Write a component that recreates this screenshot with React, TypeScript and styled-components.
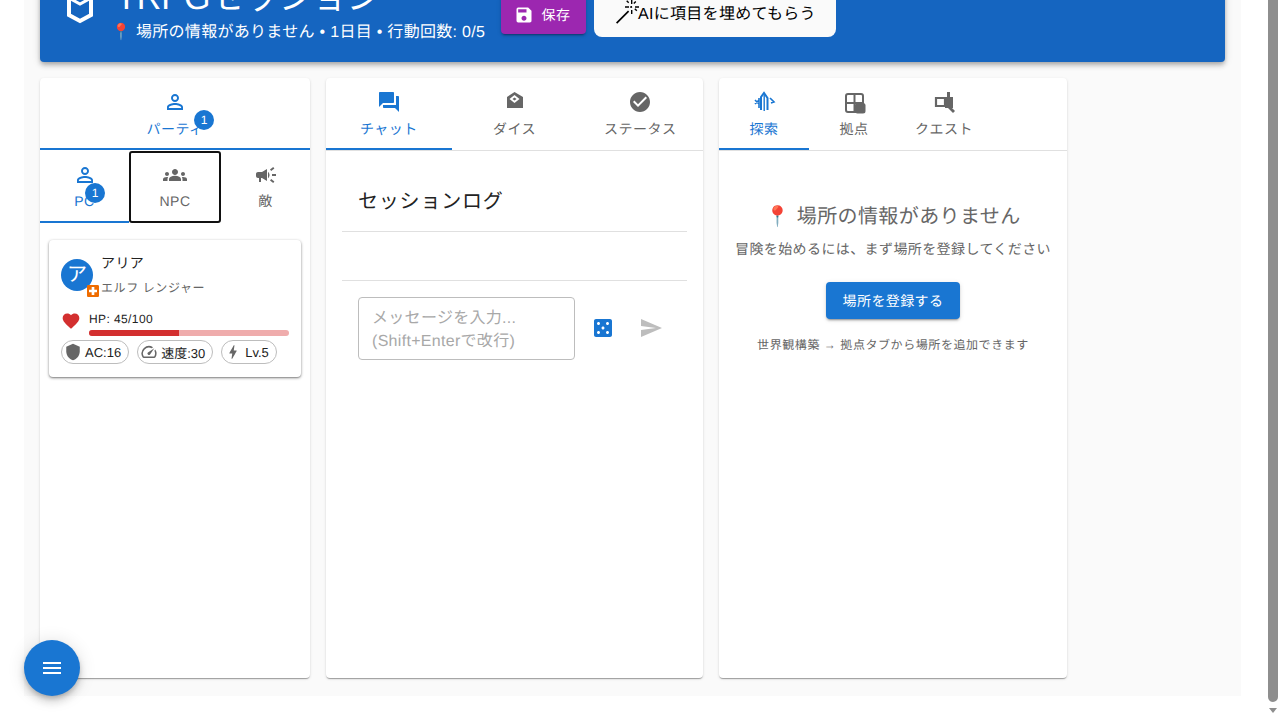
import React from "react";
import styled, { createGlobalStyle } from "styled-components";
import {
  MdBolt,
  MdCampaign,
  MdCasino,
  MdCheckCircle,
  MdFavorite,
  MdForum,
  MdGroups,
  MdLocalHospital,
  MdMenu,
  MdPersonOutline,
  MdSave,
  MdSend,
  MdShield,
  MdSpeed,
} from "react-icons/md";

const blue = "#1976d2";
const fontStack = `"Liberation Sans", "Noto Sans CJK JP", sans-serif`;

const GlobalStyle = createGlobalStyle`
  html, body {
    margin: 0;
    height: 100%;
    overflow: hidden;
    background: #fff;
    font-family: ${fontStack};
  }
  * {
    text-rendering: geometricPrecision;
  }
`;

const Viewport = styled.div`
  display: flex;
  height: 720px;
  overflow: hidden;
`;

const Outer = styled.div`
  flex: 1;
  min-width: 0;
  padding: 0 24px 24px;
`;

const Page = styled.div`
  height: 696px;
  background: #fafafa;
  padding: 0 16px;
  box-sizing: border-box;
  overflow: hidden;
`;

const Header = styled.header`
  height: 102px;
  margin-top: -40px;
  margin-bottom: 16px;
  padding: 0 24px 17px;
  box-sizing: border-box;
  background: #1565c0;
  border-radius: 4px;
  box-shadow: 0 2px 4px -1px rgba(0, 0, 0, 0.2), 0 4px 5px rgba(0, 0, 0, 0.14), 0 1px 10px rgba(0, 0, 0, 0.12);
  color: #fff;
  display: flex;
  align-items: flex-end;
`;

const LogoBox = styled.div`
  width: 32px;
  height: 32px;
  margin-bottom: 18px;
  margin-right: 20px;
  flex: none;
`;

const TitleBlock = styled.div`
  width: 385px;
  flex: none;
`;

const Title = styled.h1`
  margin: 0 0 2px;
  font-size: 34px;
  line-height: 42px;
  font-weight: 400;
  white-space: nowrap;
`;

const Subtitle = styled.div`
  font-size: 16px;
  line-height: 24px;
  margin-left: -5px;
  letter-spacing: 0.3px;
  white-space: nowrap;
`;

const HeaderActions = styled.div`
  display: flex;
  align-items: flex-end;
  gap: 8px;
  margin-bottom: 11px;
`;

const SaveButton = styled.button`
  height: 40px;
  width: 85px;
  margin: 0;
  padding: 2px 3px 0 0;
  border: 0;
  border-radius: 4px;
  background: #9c27b0;
  color: #fff;
  font: 400 14px/1 ${fontStack};
  letter-spacing: 0.4px;
  display: flex;
  align-items: center;
  justify-content: center;
  gap: 8px;
  box-shadow: 0 3px 1px -2px rgba(0, 0, 0, 0.2), 0 2px 2px rgba(0, 0, 0, 0.14), 0 1px 5px rgba(0, 0, 0, 0.12);
`;

const AiButton = styled.button`
  width: 242px;
  height: 44px;
  margin: 0 0 -3px;
  padding: 0 0 0 21px;
  border: 0;
  border-radius: 8px;
  background: #fafafa;
  color: #000;
  font: 400 16px/1 ${fontStack};
  letter-spacing: 0.3px;
  display: flex;
  align-items: center;
  white-space: nowrap;
`;

const WandIcon = styled.svg`
  width: 24px;
  height: 24px;
  margin: -6px -1px 0 0;
  flex: none;
`;

const Columns = styled.div`
  display: flex;
  align-items: flex-start;
  gap: 16px;
`;

const Panel = styled.section<{ $width: number }>`
  width: ${(p) => p.$width}px;
  height: 600px;
  flex: none;
  background: #fff;
  border-radius: 4px;
  box-shadow: 0 2px 1px -1px rgba(0, 0, 0, 0.2), 0 1px 1px rgba(0, 0, 0, 0.14), 0 1px 3px rgba(0, 0, 0, 0.12);
  overflow: hidden;
`;

const TabRow = styled.div<{ $line?: boolean }>`
  display: flex;
  box-sizing: border-box;
  ${(p) => (p.$line ? "border-bottom: 1px solid #e0e0e0; height: 73px;" : "height: 72px; margin-top: 1px;")}
`;

const Tab = styled.div<{ $active?: boolean; $width?: string; $focus?: boolean }>`
  position: relative;
  flex: ${(p) => (p.$width ? "none" : "1")};
  width: ${(p) => p.$width || "auto"};
  height: 72px;
  box-sizing: border-box;
  display: flex;
  flex-direction: column;
  align-items: center;
  padding-top: 12px;
  color: ${(p) => (p.$active ? blue : "#666")};
  font-size: 14px;
  letter-spacing: 0.5px;
  border-bottom: ${(p) => (p.$active ? `2px solid ${blue}` : "0")};
  ${(p) => (p.$focus ? "outline: 2px solid #111; outline-offset: -2px; border-radius: 3px;" : "")}
  svg {
    width: 24px;
    height: 24px;
    flex: none;
  }
`;

const TabLabel = styled.span<{ $tight?: boolean }>`
  margin-top: ${(p) => (p.$tight ? 4 : 5)}px;
  line-height: 20px;
  white-space: nowrap;
`;

const CountBadge = styled.span<{ $left: number; $top: number }>`
  position: absolute;
  left: ${(p) => p.$left}px;
  top: ${(p) => p.$top}px;
  width: 20px;
  height: 20px;
  border-radius: 50%;
  background: ${blue};
  color: #fff;
  font-size: 12px;
  letter-spacing: 0;
  line-height: 20px;
  text-align: center;
`;

const CardArea = styled.div`
  padding: 17px 9px;
`;

const Card = styled.article`
  height: 137px;
  box-sizing: border-box;
  padding: 12px;
  border-radius: 4px;
  background: #fff;
  box-shadow: 0 1px 3px rgba(0, 0, 0, 0.45), 0 1px 1px rgba(0, 0, 0, 0.14);
`;

const CardHead = styled.div`
  display: flex;
  gap: 8px;
  height: 52px;
`;

const AvatarWrap = styled.div`
  position: relative;
  width: 32px;
  height: 32px;
  margin-top: 7px;
  flex: none;
`;

const Avatar = styled.div`
  width: 32px;
  height: 32px;
  border-radius: 50%;
  background: ${blue};
  color: #fff;
  font-size: 20px;
  line-height: 32px;
  text-align: center;
`;

const RoleMark = styled.span`
  position: absolute;
  left: 25px;
  top: 25px;
  width: 14px;
  height: 14px;
  color: #ef6c00;
  svg {
    display: block;
    width: 16px;
    height: 16px;
    margin: -1px;
  }
`;

const Name = styled.div`
  margin-top: 1px;
  font-size: 14px;
  line-height: 20px;
  color: #222;
  letter-spacing: 0.4px;
`;

const Role = styled.div`
  margin-top: 6px;
  font-size: 12px;
  line-height: 18px;
  color: #666;
  letter-spacing: 0.6px;
`;

const HpRow = styled.div`
  display: flex;
  gap: 8px;
  margin-top: 6px;
  color: #d32f2f;
  svg {
    width: 20px;
    height: 20px;
    margin-top: 1px;
    flex: none;
  }
`;

const HpInfo = styled.div`
  width: 200px;
`;

const HpText = styled.div`
  font-size: 12px;
  line-height: 18px;
  color: #222;
  letter-spacing: 0.4px;
`;

const HpTrack = styled.div`
  height: 6px;
  margin-top: 2px;
  border-radius: 3px;
  background: #efacac;
  overflow: hidden;
`;

const HpFill = styled.div`
  height: 100%;
  background: #d32f2f;
`;

const ChipRow = styled.div`
  display: flex;
  gap: 8px;
  margin-top: 4px;
`;

const Chip = styled.div`
  height: 24px;
  box-sizing: border-box;
  padding: 0 7px 0 2px;
  border: 1px solid #bdbdbd;
  border-radius: 12px;
  display: flex;
  align-items: center;
  gap: 3px;
  font-size: 13px;
  color: #222;
  white-space: nowrap;
  svg {
    width: 18px;
    height: 18px;
    color: #666;
    flex: none;
  }
`;

const LogTitle = styled.h2`
  margin: 0;
  padding: 37px 32px 0;
  height: 80px;
  box-sizing: border-box;
  font-size: 20px;
  line-height: 28px;
  font-weight: 400;
  color: #222;
  letter-spacing: 0.8px;
`;

const Rule = styled.hr<{ $gap?: number }>`
  margin: 0 16px ${(p) => p.$gap || 0}px;
  border: 0;
  border-top: 1px solid #e0e0e0;
`;

const InputRow = styled.div`
  display: flex;
  align-items: center;
  padding: 0 32px;
`;

const MessageInput = styled.textarea`
  width: 217px;
  height: 63px;
  box-sizing: border-box;
  padding: 9px 13px;
  border: 1px solid #bdbdbd;
  border-radius: 4px;
  resize: none;
  outline: none;
  overflow: hidden;
  font: 400 16px/23px ${fontStack};
  letter-spacing: 0.3px;
  &::placeholder {
    color: #a8a8a8;
    opacity: 1;
  }
`;

const DiceButton = styled.span`
  width: 24px;
  height: 24px;
  margin: -2px 0 0 16px;
  color: ${blue};
  svg {
    display: block;
    width: 24px;
    height: 24px;
  }
`;

const SendButton = styled.span`
  width: 24px;
  height: 24px;
  margin: -2px 0 0 24px;
  color: #bdbdbd;
  svg {
    display: block;
    width: 24px;
    height: 24px;
  }
`;

const EmptyState = styled.div`
  padding-top: 52px;
  display: flex;
  flex-direction: column;
  align-items: center;
  color: #666;
`;

const EmptyTitle = styled.h3`
  margin: 0;
  font-size: 20px;
  line-height: 28px;
  font-weight: 400;
  letter-spacing: 0.4px;
`;

const EmptyText = styled.p`
  margin: 7px 0 0;
  font-size: 14px;
  line-height: 22px;
  letter-spacing: 0.4px;
`;

const RegisterButton = styled.button`
  width: 134px;
  height: 37px;
  margin: 22px 0 0;
  padding: 0;
  border: 0;
  border-radius: 4px;
  background: ${blue};
  color: #fff;
  font: 400 14px/1 ${fontStack};
  letter-spacing: 0.4px;
  box-shadow: 0 3px 1px -2px rgba(0, 0, 0, 0.2), 0 2px 2px rgba(0, 0, 0, 0.14), 0 1px 5px rgba(0, 0, 0, 0.12);
`;

const Hint = styled.p`
  margin: 17px 0 0;
  font-size: 12px;
  line-height: 18px;
  letter-spacing: 0.57px;
`;

const Fab = styled.button`
  position: fixed;
  left: 24px;
  bottom: 24px;
  width: 56px;
  height: 56px;
  padding: 0;
  border: 0;
  border-radius: 50%;
  background: ${blue};
  color: #fff;
  display: flex;
  align-items: center;
  justify-content: center;
  box-shadow: 0 3px 5px -1px rgba(0, 0, 0, 0.2), 0 6px 10px rgba(0, 0, 0, 0.14), 0 1px 18px rgba(0, 0, 0, 0.12);
  svg {
    width: 24px;
    height: 24px;
  }
`;

const ScrollTrack = styled.div`
  width: 15px;
  flex: none;
  background: #fff;
  display: flex;
  flex-direction: column;
  align-items: center;
`;

const ScrollThumb = styled.div`
  width: 10px;
  height: 702px;
  margin-left: 1px;
  border-radius: 0 0 5px 5px;
  background: #8e8e8e;
`;

const ScrollArrow = styled.div`
  width: 0;
  height: 0;
  margin: 6px 0 0 1px;
  border-left: 4.5px solid transparent;
  border-right: 4.5px solid transparent;
  border-top: 5px solid #8e8e8e;
`;

const HexLogo = () => (
  <svg viewBox="0 0 32 32" width="32" height="32" fill="none" stroke="#fff" strokeWidth="4">
    <path d="M5 1v19l11 6 11-6V1l-11-6z" />
    <path d="M5 3l11 6 11-6" strokeWidth="3" />
  </svg>
);

const Wand = () => (
  <WandIcon viewBox="0 0 24 24" fill="#000">
    <path d="M1 22.5L13 10.5l1.2 1.2L2.2 23.7z" />
    <path d="M16 0h1.4v4H16zM16 10h1.4v4H16zM20 6.3h4v1.4h-4zM10 6.3h4v1.4h-4z" />
    <path d="M11.2 1.2l1-1 2 2-1 1zM19.3 9.3l1-1 2 2-1 1zM20.3 1l1 1-2 2-1-1zM15.2 6.2l1.8-.2.2 1.8-1.8.2z" />
  </WandIcon>
);

const DiceTabIcon = () => (
  <svg viewBox="0 0 24 24" fill="currentColor">
    <path d="M11.5 2L20 7v11H4V7z" />
    <path d="M11.5 5l5 4-5 4-5-4z" fill="#fff" />
    <path d="M11.5 7.5l2 1.5-2 1.5-2-1.5z" />
  </svg>
);

const ExploreIcon = () => (
  <svg viewBox="0 0 24 24" fill="none" stroke="currentColor" strokeWidth="2">
    <path d="M9 20V7l3-4 3.5 5v12" />
    <path d="M12.2 5v16" strokeWidth="1.4" />
    <path d="M3 10l4 4M3 14l4-4M7 8v10M18 8l4 4-3 1" strokeWidth="1.6" />
  </svg>
);

const BaseIcon = () => (
  <svg viewBox="0 0 24 24" fill="none" stroke="currentColor" strokeWidth="2">
    <rect x="4" y="4" width="17" height="18" rx="2" />
    <path d="M12.5 4v18M4 13h17" />
    <rect x="13" y="13" width="10.5" height="10.5" rx="2.5" fill="currentColor" stroke="none" />
  </svg>
);

const QuestIcon = () => (
  <svg viewBox="0 0 24 24" fill="currentColor">
    <path d="M4 8h9v8H4z" fill="none" stroke="currentColor" strokeWidth="2.2" />
    <path d="M13 7h8v11h-8zM15 2h3v5h-3z" />
    <path d="M13 15l2-2 8 8-2 2z" />
  </svg>
);

const App: React.FC = () => {
  const hpPercent = (45 / 100) * 100;

  return (
    <React.Fragment>
      <GlobalStyle />
      <Viewport>
        <Outer>
          <Page>
            <Header>
              <LogoBox>
                <HexLogo />
              </LogoBox>
              <TitleBlock>
                <Title>TRPGセッション</Title>
                <Subtitle>📍 場所の情報がありません • 1日目 • 行動回数: 0/5</Subtitle>
              </TitleBlock>
              <HeaderActions>
                <SaveButton>
                  <MdSave size={20} />
                  保存
                </SaveButton>
                <AiButton>
                  <Wand />
                  AIに項目を埋めてもらう
                </AiButton>
              </HeaderActions>
            </Header>

            <Columns>
              <Panel $width={270}>
                <Tab $active>
                  <MdPersonOutline />
                  <TabLabel>パーティ</TabLabel>
                  <CountBadge $left={154} $top={32}>1</CountBadge>
                </Tab>
                <TabRow>
                  <Tab $active $width="89px">
                    <MdPersonOutline />
                    <TabLabel $tight>PC</TabLabel>
                    <CountBadge $left={45} $top={32}>1</CountBadge>
                  </Tab>
                  <Tab $focus $width="92px">
                    <MdGroups />
                    <TabLabel $tight>NPC</TabLabel>
                  </Tab>
                  <Tab>
                    <MdCampaign />
                    <TabLabel $tight>敵</TabLabel>
                  </Tab>
                </TabRow>
                <CardArea>
                  <Card>
                    <CardHead>
                      <AvatarWrap>
                        <Avatar>ア</Avatar>
                        <RoleMark>
                          <MdLocalHospital />
                        </RoleMark>
                      </AvatarWrap>
                      <div>
                        <Name>アリア</Name>
                        <Role>エルフ レンジャー</Role>
                      </div>
                    </CardHead>
                    <HpRow>
                      <MdFavorite />
                      <HpInfo>
                        <HpText>HP: 45/100</HpText>
                        <HpTrack>
                          <HpFill style={{ width: `${hpPercent}%` }} />
                        </HpTrack>
                      </HpInfo>
                    </HpRow>
                    <ChipRow>
                      <Chip>
                        <MdShield />
                        AC:16
                      </Chip>
                      <Chip>
                        <MdSpeed />
                        速度:30
                      </Chip>
                      <Chip>
                        <MdBolt />
                        Lv.5
                      </Chip>
                    </ChipRow>
                  </Card>
                </CardArea>
              </Panel>

              <Panel $width={377}>
                <TabRow $line>
                  <Tab $active>
                    <MdForum />
                    <TabLabel>チャット</TabLabel>
                  </Tab>
                  <Tab>
                    <DiceTabIcon />
                    <TabLabel>ダイス</TabLabel>
                  </Tab>
                  <Tab>
                    <MdCheckCircle />
                    <TabLabel>ステータス</TabLabel>
                  </Tab>
                </TabRow>
                <LogTitle>セッションログ</LogTitle>
                <Rule $gap={48} />
                <Rule $gap={16} />
                <InputRow>
                  <MessageInput rows={2} placeholder={"メッセージを入力...\n(Shift+Enterで改行)"} />
                  <DiceButton>
                    <MdCasino />
                  </DiceButton>
                  <SendButton>
                    <MdSend />
                  </SendButton>
                </InputRow>
              </Panel>

              <Panel $width={348}>
                <TabRow $line>
                  <Tab $active $width="90px">
                    <ExploreIcon />
                    <TabLabel>探索</TabLabel>
                  </Tab>
                  <Tab $width="90px">
                    <BaseIcon />
                    <TabLabel>拠点</TabLabel>
                  </Tab>
                  <Tab $width="90px">
                    <QuestIcon />
                    <TabLabel>クエスト</TabLabel>
                  </Tab>
                </TabRow>
                <EmptyState>
                  <EmptyTitle>📍 場所の情報がありません</EmptyTitle>
                  <EmptyText>冒険を始めるには、まず場所を登録してください</EmptyText>
                  <RegisterButton>場所を登録する</RegisterButton>
                  <Hint>世界観構築 → 拠点タブから場所を追加できます</Hint>
                </EmptyState>
              </Panel>
            </Columns>
          </Page>
        </Outer>
        <ScrollTrack>
          <ScrollThumb />
          <ScrollArrow />
        </ScrollTrack>
        <Fab>
          <MdMenu />
        </Fab>
      </Viewport>
    </React.Fragment>
  );
};

export default App;
